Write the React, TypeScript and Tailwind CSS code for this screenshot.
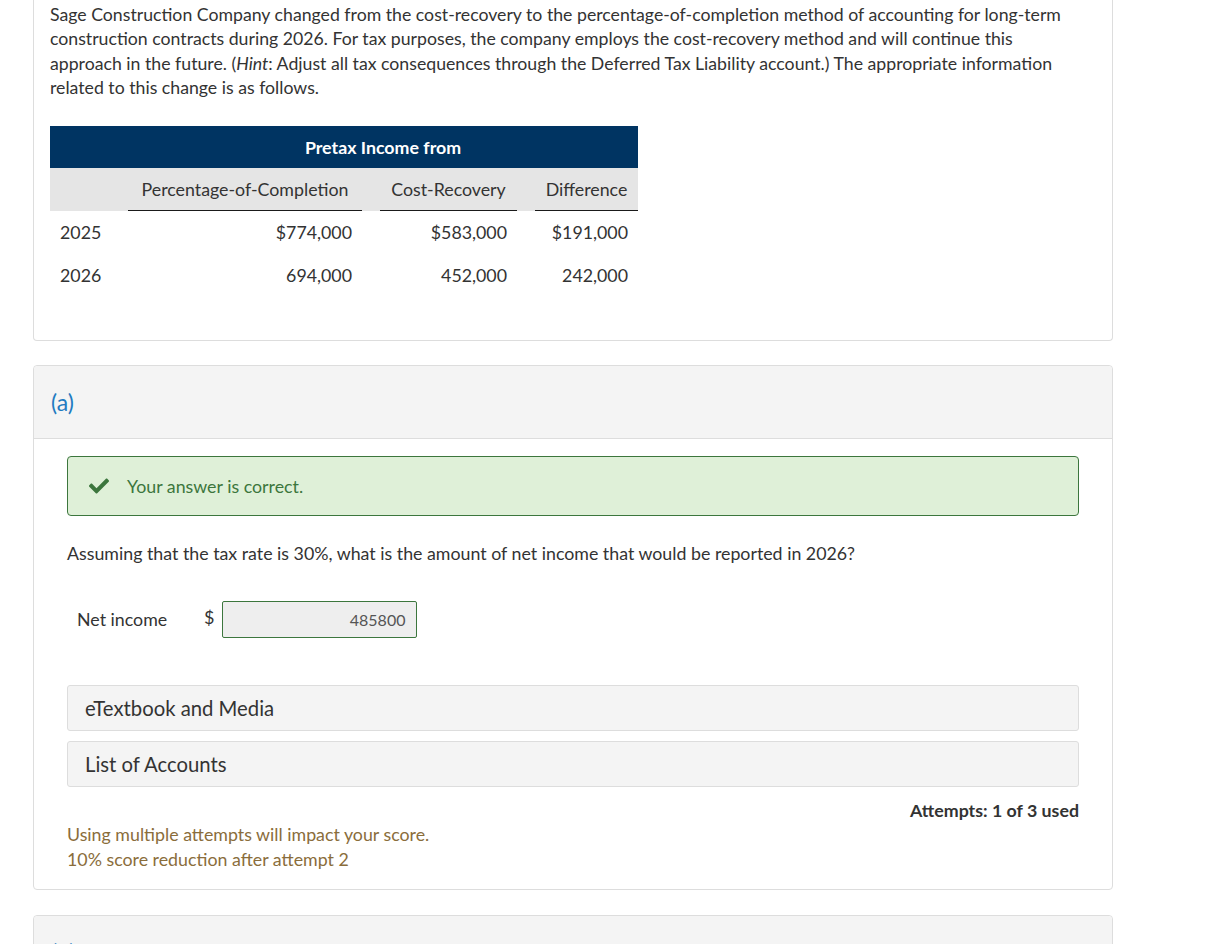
import React from "react";
import { FaCheck } from "react-icons/fa";

const rows = [
  { year: "2025", poc: "$774,000", cr: "$583,000", diff: "$191,000" },
  { year: "2026", poc: "694,000", cr: "452,000", diff: "242,000" },
];

function Cell({ children }: { children: React.ReactNode }) {
  return (
    <div className="pl-[18px] h-full flex">
      <div className="flex-1 flex items-center justify-end pr-[10px]">{children}</div>
    </div>
  );
}

function HeadCell({ children }: { children: React.ReactNode }) {
  return (
    <div className="pl-[18px] h-full flex">
      <div className="flex-1 flex items-center justify-center border-b border-[#1a1a1a]">{children}</div>
    </div>
  );
}

export default function App() {
  return (
    <div className="bg-white font-['Lato','Liberation_Sans',sans-serif] text-[#333] overflow-hidden h-[944px]">
      <div className="ml-[33px] w-[1080px]">
        {/* Card 1 */}
        <div className="border-x border-b border-[#ddd] rounded-b-[4px] px-[16px] pt-[3px] pb-[43px]">
          <p className="pr-[20px] text-[17.7px] leading-[24.3px] text-[#333]">
            Sage Construction Company changed from the cost-recovery to the percentage-of-completion method of accounting for long-term construction contracts during 2026. For tax purposes, the company employs the cost-recovery method and will continue this approach in the future. (<i>Hint</i>: Adjust all tax consequences through the Deferred Tax Liability account.) The appropriate information related to this change is as follows.
          </p>
          <div className="mt-[26px] w-[588px] text-[17.8px] text-[#333]">
            <div className="h-[42px] bg-[#003462] grid grid-cols-[60px_1fr] items-center">
              <div></div>
              <div className="text-center text-white font-bold pl-[18px]">Pretax Income from</div>
            </div>
            <div className="h-[43px] bg-[#e5e5e5] grid grid-cols-[60px_252px_155px_121px]">
              <div></div>
              <HeadCell>Percentage-of-Completion</HeadCell>
              <HeadCell>Cost-Recovery</HeadCell>
              <HeadCell>Difference</HeadCell>
            </div>
            {rows.map((r) => (
              <div key={r.year} className="h-[43px] grid grid-cols-[60px_252px_155px_121px]">
                <div className="pl-[10px] flex items-center">{r.year}</div>
                <Cell>{r.poc}</Cell>
                <Cell>{r.cr}</Cell>
                <Cell>{r.diff}</Cell>
              </div>
            ))}
          </div>
        </div>

        {/* Card 2 */}
        <div className="mt-[24px] border border-[#ddd] rounded-[4px]">
          <div className="h-[73px] bg-[#f4f4f4] border-b border-[#ddd] flex items-center pl-[17px] rounded-t-[4px]">
            <span className="text-[23px] text-[#1f7bc1]">(a)</span>
          </div>
          <div className="px-[33px] pt-[17px] pb-[17px]">
            <div className="h-[60px] bg-[#dff0d8] border border-[#3c763d] rounded-[4px] flex items-center pl-[21px]">
              <FaCheck className="text-[#3c763d] w-[20px] h-[20px]" />
              <span className="ml-[18px] text-[17.8px] text-[#3c763d]">Your answer is correct.</span>
            </div>
            <p className="mt-[25px] text-[17.8px] leading-[24px] text-[#333]">
              Assuming that the tax rate is 30%, what is the amount of net income that would be reported in 2026?
            </p>
            <div className="mt-[36px] flex items-center h-[37px]">
              <span className="pl-[10px] w-[137px] text-[17.8px] text-[#333]">Net income</span>
              <span className="text-[18px] text-[#333] mb-[4px]">$</span>
              <div className="ml-[8px] w-[195px] h-[37px] bg-[#eeeeee] border border-[#3c763d] rounded-[2px] flex items-center justify-end pr-[11px] text-[16px] text-[#555]">
                485800
              </div>
            </div>
            <div className="mt-[47px] h-[46px] bg-[#f4f4f4] border border-[#ddd] rounded-[3px] flex items-center pl-[17px] text-[20.3px] text-[#333]">
              eTextbook and Media
            </div>
            <div className="mt-[10px] h-[46px] bg-[#f4f4f4] border border-[#ddd] rounded-[3px] flex items-center pl-[17px] text-[20.3px] text-[#333]">
              List of Accounts
            </div>
            <div className="mt-[11px] text-right font-bold text-[17.8px] leading-[24px] text-[#333]">
              Attempts: 1 of 3 used
            </div>
            <div className="text-[17.8px] leading-[25px] text-[#8a6d3b]">
              <div>Using multiple attempts will impact your score.</div>
              <div>10% score reduction after attempt 2</div>
            </div>
          </div>
        </div>

        {/* Card 3 */}
        <div className="mt-[25px] border border-[#ddd] rounded-[4px]">
          <div className="h-[73px] bg-[#f4f4f4] border-b border-[#ddd] flex items-center pl-[17px] rounded-t-[4px]">
            <span className="text-[23px] text-[#1f7bc1]">(b)</span>
          </div>
        </div>
      </div>
    </div>
  );
}
